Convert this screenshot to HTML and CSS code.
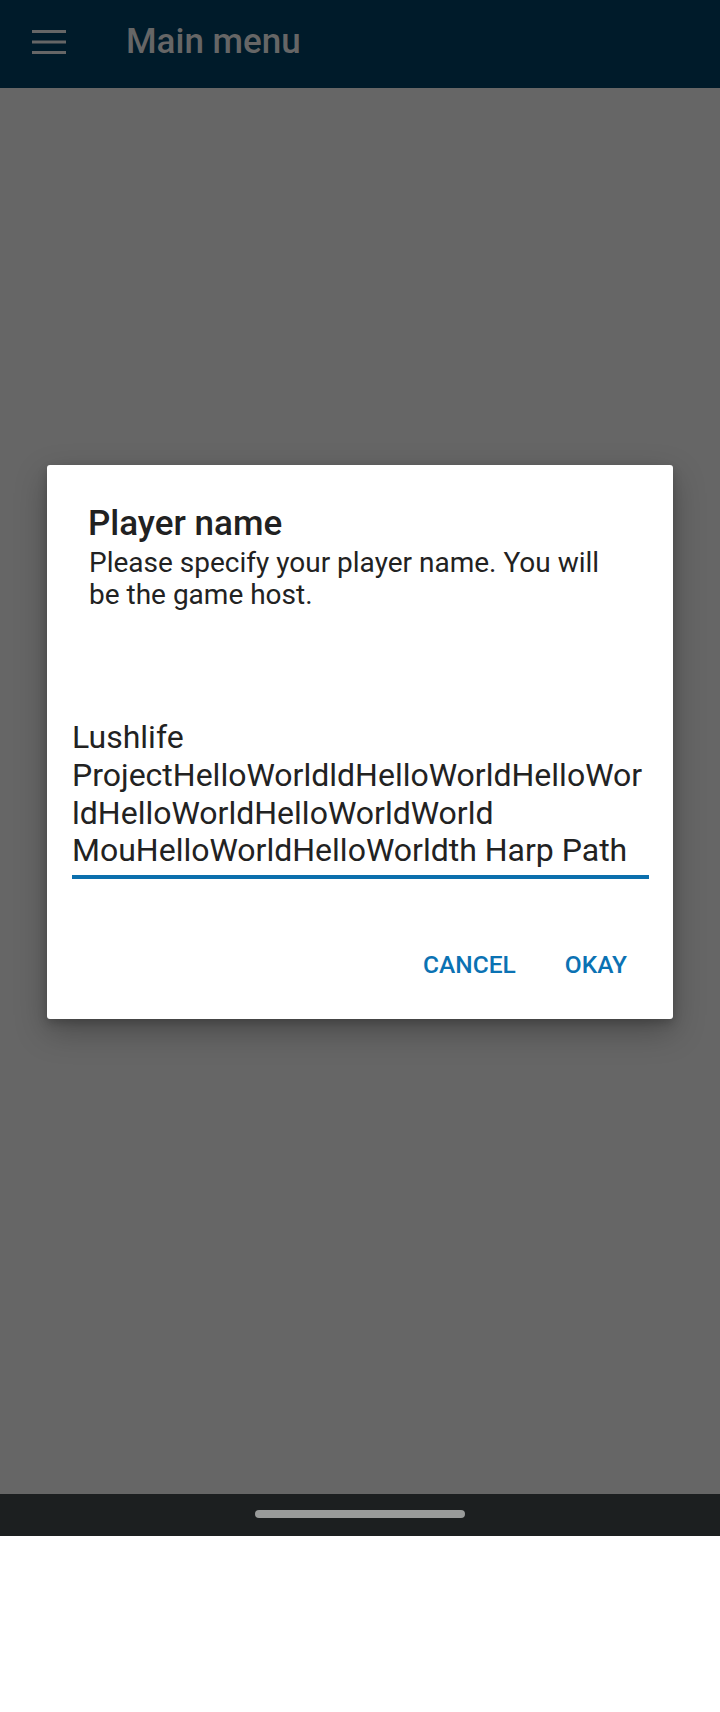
FILE: index.html
```html
<!DOCTYPE html>
<html lang="en">
<head>
<meta charset="utf-8">
<title>Main menu</title>
<link rel="stylesheet" href="styles.css">
</head>
<body>
<div class="screen">
  <div class="app">
    <header class="toolbar">
      <svg class="menu-icon" width="34" height="26" viewBox="0 0 34 26" aria-hidden="true">
        <rect x="0" y="0" width="34" height="3" fill="#666666"/>
        <rect x="0" y="10.5" width="34" height="3" fill="#666666"/>
        <rect x="0" y="21" width="34" height="3" fill="#666666"/>
      </svg>
      <h1 class="toolbar-title">Main menu</h1>
    </header>
    <main class="content"></main>
    <div class="overlay">
      <div class="dialog" role="dialog">
        <h2 class="dialog-title">Player name</h2>
        <p class="dialog-message">Please specify your player name. You will be the game host.</p>
        <div class="field">
          <div class="field-text">
            <span class="line">Lushlife</span>
            <span class="line">ProjectHelloWorldldHelloWorldHelloWor</span>
            <span class="line">ldHelloWorldHelloWorldWorld</span>
            <span class="line">MouHelloWorldHelloWorldth Harp Path</span>
          </div>
        </div>
        <div class="actions">
          <button class="btn">CANCEL</button>
          <button class="btn">OKAY</button>
        </div>
      </div>
    </div>
  </div>
  <div class="navbar"><div class="handle"></div></div>
  <div class="below"></div>
</div>
</body>
</html>
```
FILE: styles.css
```css
* { box-sizing: border-box; }
html, body {
  margin: 0;
  padding: 0;
  background: #ffffff;
  font-family: Roboto, "Noto Sans", "Liberation Sans", sans-serif;
}
.screen {
  width: 720px;
  height: 1712px;
  display: flex;
  flex-direction: column;
}
.app {
  position: relative;
  height: 1494px;
  display: flex;
  flex-direction: column;
}
.toolbar {
  height: 88px;
  background: #001b2a;
  display: flex;
  align-items: center;
  padding-left: 32px;
}
.menu-icon {
  display: block;
  margin-top: -2px;
  flex: none;
}
.toolbar-title {
  margin: -6px 0 0 60px;
  font-size: 35px;
  font-weight: 500;
  color: #666666;
  line-height: 41px;
}
.content {
  flex: 1;
  background: #666666;
}
.overlay {
  position: absolute;
  inset: 0;
  display: flex;
  justify-content: center;
  align-items: flex-start;
  padding-top: 465px;
}
.dialog {
  width: 626px;
  height: 554px;
  background: #ffffff;
  border-radius: 3px;
  box-shadow: 0 12px 32px rgba(0, 0, 0, 0.28), 0 4px 10px rgba(0, 0, 0, 0.18);
  display: flex;
  flex-direction: column;
}
.dialog-title {
  margin: 38px 42px 0 41px;
  font-size: 35px;
  font-weight: 500;
  line-height: 41px;
  color: #212121;
}
.dialog-message {
  margin: 3px 56px 0 42px;
  font-size: 28px;
  line-height: 32px;
  color: #222222;
}
.field {
  margin: 108px 24px 0 25px;
}
.field-text {
  font-size: 32px;
  line-height: 37.8px;
  color: #222222;
  padding-bottom: 5px;
  border-bottom: 4px solid #0b6fad;
}
.line {
  display: block;
  white-space: nowrap;
}
.actions {
  margin-top: 72px;
  display: flex;
  justify-content: flex-end;
  gap: 49px;
  padding-right: 46px;
}
.btn {
  border: none;
  background: none;
  padding: 0;
  font-family: Roboto, "Noto Sans", "Liberation Sans", sans-serif;
  font-size: 24.5px;
  font-weight: 500;
  line-height: 28.7px;
  color: #0b72b3;
}
.navbar {
  height: 42px;
  background: #1c1f20;
  display: flex;
  justify-content: center;
  padding-top: 16px;
}
.handle {
  width: 210px;
  height: 8px;
  border-radius: 4px;
  background: #999b9a;
}
.below {
  flex: 1;
  background: #ffffff;
}
```
